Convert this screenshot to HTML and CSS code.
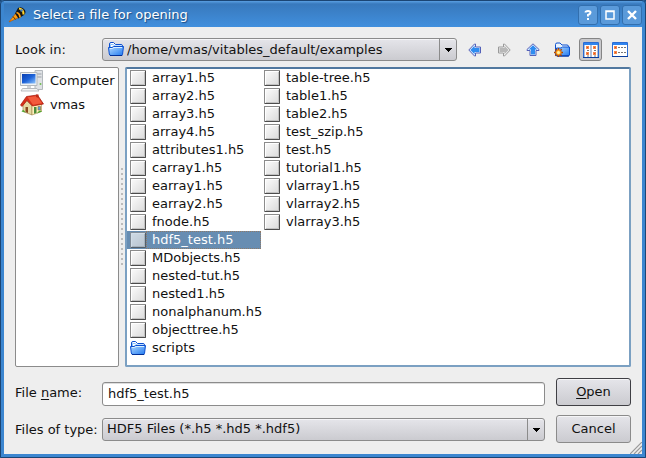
FILE: index.html
```
<!DOCTYPE html>
<html lang="en">
<head>
<meta charset="utf-8">
<title>Select a file for opening</title>
<link rel="stylesheet" href="styles.css">
</head>
<body>
<svg class="defs" aria-hidden="true">
  <defs>
    <linearGradient id="gFolder" x1="0" y1="0" x2="1" y2="1"><stop offset="0" stop-color="#b4dcff"/><stop offset="1" stop-color="#1f78f0"/></linearGradient>
    <linearGradient id="gFile" x1="0" y1="0" x2="1" y2="1"><stop offset="0" stop-color="#fdfdfd"/><stop offset="1" stop-color="#d9d9d9"/></linearGradient>
    <linearGradient id="gScreen" x1="0" y1="0" x2="1" y2="1"><stop offset="0" stop-color="#0a3fb0"/><stop offset=".5" stop-color="#1c62d8"/><stop offset="1" stop-color="#8cc4ff"/></linearGradient>
    <symbol id="folder" viewBox="0 0 16 14">
      <path d="M1.500 10V2Q1.500 .5 3 .5H5.500L7.500 2.500H13Q14.500 2.500 14.500 4V6" fill="#fff" stroke="#0b4fd0"/>
      <path d="M2.500 10V2.500H5L7 4H13" fill="none" stroke="#8ac4ff"/>
      <path d="M.5 5.500H4L5.500 4.500H15.500L14.500 12.500Q14.400 13.500 13 13.500H3Q1.500 13.500 1.300 12Z" fill="url(#gFolder)" stroke="#0b4fd0"/>
      <path d="M2 6.500H4.500L6 5.500H14" fill="none" stroke="#d9efff"/>
      <path d="M2 13.500H14.200" stroke="#002f98"/>
    </symbol>
    <symbol id="folder-tall" viewBox="0 0 16 14">
      <path d="M1.500 13V2Q1.500 .5 3 .5H6L8 2.500H13Q14.500 2.500 14.500 4V13Z" fill="#eaf5ff" stroke="#0b4fd0"/>
      <path d="M2.500 13V5.500H7L8.500 4.500H15.500V12.500L14.500 13.500H2.500Z" fill="url(#gFolder)" stroke="#0b4fd0"/>
      <path d="M3 13.500H15" stroke="#002f98"/>
    </symbol>
    <symbol id="file" viewBox="0 0 16 16">
      <rect x=".5" y=".5" width="15" height="15" fill="url(#gFile)" stroke="#8c8c8c"/>
      <path d="M1.500 14.500V1.500H14.500" fill="none" stroke="#fff"/>
      <path d="M1 15.500H15.500V1" fill="none" stroke="#4c4c4c"/>
      <path d="M2 14.500H14.500V2" fill="none" stroke="#c2c2c2"/>
    </symbol>
    <symbol id="arrow" viewBox="0 0 14 14">
      <path class="arrow-rim" d="M.8 7 6.500 1H7.500V4H12.500V10H7.500V13H6.500Z"/>
      <path class="arrow-core" d="M2.300 7 6.600 2.700V5H11.500V9H6.600V11.300Z"/>
    </symbol>
  </defs>
</svg>
<div class="window">
  <header class="titlebar">
    <svg class="app-icon" viewBox="0 0 18 18" aria-hidden="true">
      <path d="M1 16 8 7 12 11Z" fill="#ff9d12" stroke="#a65300" stroke-width=".6"/>
      <path d="M7 7.500 10 2Q13 0 16 3T16 9L10.500 12.500Z" fill="#151515"/>
      <path d="M5 10.500 7.500 13.500" stroke="#5c3300" stroke-width="1"/>
      <path d="M8.500 6.500Q12 7.500 12 11.500" fill="none" stroke="#ff9d12" stroke-width="1.800"/>
      <path d="M11 2.500Q15.500 3 15.500 8.500" fill="none" stroke="#ffd22a" stroke-width="2"/>
      <circle cx="13.500" cy="4.500" r="1.300" fill="#4e7fb5"/>
      <path d="M1 16 3.500 14.500 2.500 13.500Z" fill="#e46b00"/>
    </svg>
    <h1 class="title">Select a file for opening</h1>
    <button class="win-btn" type="button" aria-label="Help"><svg viewBox="0 0 12 12"><path d="M3.500 3.500Q3.500 2 6 2T8.500 3.800Q8.500 5 6 6V7.500M6 9V11"/></svg></button>
    <button class="win-btn" type="button" aria-label="Maximize"><svg viewBox="0 0 12 12"><path d="M2 2H10V10H2ZM2 2.500H10" stroke-width="1.500"/></svg></button>
    <button class="win-btn" type="button" aria-label="Close"><svg viewBox="0 0 12 12"><path d="M2 2 10 10M10 2 2 10" stroke-width="2.400"/></svg></button>
  </header>

  <main class="content">
    <div class="look-row">
      <label class="label" for="look">Look in:</label>
      <div class="combo with-icon">
        <svg class="combo-icon" aria-hidden="true"><use href="#folder"/></svg>
        <select id="look"><option>/home/vmas/vitables_default/examples</option></select>
      </div>
      <div class="tools">
        <button class="tool" type="button" aria-label="Back"><svg class="nav" viewBox="0 0 14 14"><use href="#arrow"/></svg></button>
        <button class="tool" type="button" aria-label="Forward" disabled><svg class="nav off" viewBox="0 0 14 14"><use href="#arrow" transform="rotate(180 7 7)"/></svg></button>
        <button class="tool" type="button" aria-label="Parent directory"><svg class="nav" viewBox="0 0 14 14"><use href="#arrow" transform="rotate(90 7 7)"/></svg></button>
        <button class="tool" type="button" aria-label="Create new folder">
          <svg class="new-folder" viewBox="0 0 18 16">
            <use href="#folder-tall" x="1" y="0" width="16" height="15"/>
            <path d="M5.500 6V15M1 10.500H10M2.300 7.300 8.700 13.700M8.700 7.300 2.300 13.700" stroke="#a64300" stroke-width="1.400"/>
            <circle cx="5.500" cy="10.500" r="2.800" fill="#ffad28" stroke="#d96000" stroke-width=".8"/>
            <circle cx="5.500" cy="10.500" r="1.500" fill="#fff2a6"/>
          </svg>
        </button>
        <button class="tool pressed" type="button" aria-label="List view" aria-pressed="true">
          <svg class="view" viewBox="0 0 16 16">
            <path d="M.5 .5H15.500V15.500H.5Z" fill="#fff" stroke="#2a6cd4"/>
            <path d="M1 1H15V3H1Z" fill="#2f84ee"/><path d="M0 15.500H16" stroke="#083c9c"/>
            <path d="M1.500 3V15M7.500 3V15M8.500 3V15M14.500 3V15" stroke="#b3bfd4"/>
            <path d="M3 4H6V7H3ZM3 10H6V13H3ZM10 4H13V7H10ZM10 10H13V13H10Z" fill="#f4864a"/>
            <path d="M4 5H5V6H4ZM4 11H5V12H4ZM11 5H12V6H11ZM11 11H12V12H11Z" fill="#e64f10"/>
            <path d="M4 8.500H6M11 8.500H13M4 14H6M11 14H13" stroke="#777"/>
          </svg>
        </button>
        <button class="tool" type="button" aria-label="Detail view">
          <svg class="view" viewBox="0 0 16 16">
            <path d="M.5 .5H15.500V14.500H.5Z" fill="#fff" stroke="#2a6cd4"/>
            <path d="M1 1H15V3H1Z" fill="#2f84ee"/><path d="M0 14.500H16" stroke="#083c9c"/>
            <path d="M2 4H5V7H2ZM2 9H5V12H2Z" fill="#f4864a"/>
            <path d="M3 5H4V6H3ZM3 10H4V11H3Z" fill="#e64f10"/>
            <path d="M6 5.500H8M9 5.500H11M12 5.500H14M6 10.500H8M9 10.500H11M12 10.500H14" stroke="#777"/>
          </svg>
        </button>
      </div>
    </div>

    <div class="panes">
      <ul class="places">
        <li><svg viewBox="0 0 24 22" aria-hidden="true">
          <path d="M15 .5H22.500V19.500H15Z" fill="#dfe2e5" stroke="#b3b8bd"/>
          <path d="M17 4H21.500M17 7H21.500" stroke="#9ba1a8"/><circle cx="20.500" cy="14" r="1" fill="#6fbb52"/>
          <path d="M.5 2.500H17V15.500H.5Z" fill="#eef1f4" stroke="#b3b8bd"/>
          <path d="M2 4H15.500V13.500H2Z" fill="url(#gScreen)"/>
          <path d="M7 16H11V18H14V19H4V18H7Z" fill="#cfd3d7"/>
          <path d="M2.500 18.500H17L19 21H1Z" fill="#f3f3f3" stroke="#a9aeb4" stroke-width=".8"/>
        </svg>Computer</li>
        <li><svg viewBox="0 0 24 22" aria-hidden="true">
          <path d="M3 10 6 6 12 12V21L3 17.500Z" fill="#e6d9a3" stroke="#8e7840" stroke-width=".6"/>
          <path d="M12 10H21.500V17.500L12 21Z" fill="#fff0bd" stroke="#a68a4b" stroke-width=".6"/>
          <path d="M.5 11 6.500 2.500 17.500 1 23.500 10 12.500 12 7 6.500 2 12.500Z" fill="#d8301a" stroke="#a31608" stroke-width=".7"/>
          <path d="M7.500 3.200 17 2 22 9.200 13 10.800Z" fill="#f25a3c"/>
          <path d="M16 .5H18.500V4L16 3Z" fill="#bd2b18"/>
          <path d="M5.500 13H8V19L5.500 18Z" fill="#8a4b20"/>
          <path d="M14 13H16.500V19L14 19.800Z" fill="#4c8a3a"/><path d="M18 12.500H20.500V16H18Z" fill="#5b9de0" stroke="#846d38" stroke-width=".6"/>
          <path d="M1.500 17.500Q3.500 14 5.500 18.500ZM17 19.500Q19.500 15 22 17.500Z" fill="#4fa72f"/>
        </svg>vmas</li>
      </ul>
      <div class="splitter" role="separator"><span></span></div>
      <ul class="files" role="listbox" aria-label="Files">
        <li><svg><use href="#file"/></svg><span>array1.h5</span></li>
        <li><svg><use href="#file"/></svg><span>array2.h5</span></li>
        <li><svg><use href="#file"/></svg><span>array3.h5</span></li>
        <li><svg><use href="#file"/></svg><span>array4.h5</span></li>
        <li><svg><use href="#file"/></svg><span>attributes1.h5</span></li>
        <li><svg><use href="#file"/></svg><span>carray1.h5</span></li>
        <li><svg><use href="#file"/></svg><span>earray1.h5</span></li>
        <li><svg><use href="#file"/></svg><span>earray2.h5</span></li>
        <li><svg><use href="#file"/></svg><span>fnode.h5</span></li>
        <li class="selected"><svg><use href="#file"/></svg><span>hdf5_test.h5</span></li>
        <li><svg><use href="#file"/></svg><span>MDobjects.h5</span></li>
        <li><svg><use href="#file"/></svg><span>nested-tut.h5</span></li>
        <li><svg><use href="#file"/></svg><span>nested1.h5</span></li>
        <li><svg><use href="#file"/></svg><span>nonalphanum.h5</span></li>
        <li><svg><use href="#file"/></svg><span>objecttree.h5</span></li>
        <li><svg><use href="#folder"/></svg><span>scripts</span></li>
        <li><svg><use href="#file"/></svg><span>table-tree.h5</span></li>
        <li><svg><use href="#file"/></svg><span>table1.h5</span></li>
        <li><svg><use href="#file"/></svg><span>table2.h5</span></li>
        <li><svg><use href="#file"/></svg><span>test_szip.h5</span></li>
        <li><svg><use href="#file"/></svg><span>test.h5</span></li>
        <li><svg><use href="#file"/></svg><span>tutorial1.h5</span></li>
        <li><svg><use href="#file"/></svg><span>vlarray1.h5</span></li>
        <li><svg><use href="#file"/></svg><span>vlarray2.h5</span></li>
        <li><svg><use href="#file"/></svg><span>vlarray3.h5</span></li>
      </ul>
    </div>

    <form class="form">
      <label class="label" for="name">File <u>n</u>ame:</label>
      <input class="field" id="name" type="text" value="hdf5_test.h5">
      <button class="btn default" type="button"><u>O</u>pen</button>
      <label class="label" for="type">Files of type:</label>
      <div class="combo"><select id="type"><option>HDF5 Files (*.h5 *.hd5 *.hdf5)</option></select></div>
      <button class="btn" type="button">Cancel</button>
    </form>
  </main>
  <svg class="grip" viewBox="0 0 12 12" aria-hidden="true"><path d="M0 12 12 0M4 12 12 4M8 12 12 8" stroke="#999" stroke-width="1.200"/></svg>
</div>
</body>
</html>
```
FILE: styles.css
```
* { box-sizing: border-box; }
body {
  margin: 0;
  background: #1b4574;
  font: 13px/18px "DejaVu Sans", sans-serif;
  color: #111;
}
ul { list-style: none; margin: 0; padding: 0; }
button, select, input { font: inherit; color: inherit; margin: 0; }
svg { flex: none; display: block; }
u { text-underline-offset: 2px; }
.defs { position: absolute; width: 0; height: 0; }

.window {
  position: relative;
  display: flex;
  flex-direction: column;
  min-height: 100vh;
  background: #eee;
  border: solid #3c86d0;
  border-width: 0 4px 4px;
  outline: 1px solid #1b4574;
  outline-offset: -1px;
  border-radius: 4px 4px 0 0;
}
.titlebar {
  display: flex;
  align-items: center;
  gap: 2px;
  height: 27px;
  padding: 3px 0 0 4px;
  background: linear-gradient(#1b4574 0, #1b4574 1px, #5a9fe2 1px, #3879bd 4px, #418fdd 100%);
}
.app-icon { width: 18px; height: 18px; }
.title {
  flex: 1;
  margin: 0 0 0 5px;
  font-size: 13px;
  font-weight: normal;
  line-height: 20px;
  color: #fff;
  text-shadow: 1px 1px 1px #1c4c80;
}
.win-btn {
  display: grid;
  place-items: center;
  width: 20px;
  height: 20px;
  padding: 0;
  border: 1px solid #326fae;
  border-radius: 3px;
  background: #5a9ada;
}
.win-btn svg { width: 12px; height: 12px; fill: none; stroke: #fff; stroke-width: 2; }

.content {
  flex: 1;
  display: flex;
  flex-direction: column;
  padding: 11px;
}
.look-row {
  display: grid;
  grid-template-columns: 87px 1fr 174px;
  align-items: center;
  height: 23px;
}
.combo { position: relative; display: flex; min-width: 0; }
.combo::after {
  content: "";
  position: absolute;
  top: 1px;
  right: 1px;
  bottom: 1px;
  width: 16px;
  border-left: 1px solid #8b8b8b;
  background: linear-gradient(#000, #000) 5px 9px / 7px 1px no-repeat,
    linear-gradient(#000, #000) 6px 10px / 5px 1px no-repeat,
    linear-gradient(#000, #000) 7px 11px / 3px 1px no-repeat,
    linear-gradient(#000, #000) 8px 12px / 1px 1px no-repeat;
  pointer-events: none;
}
.combo select {
  appearance: none;
  width: 100%;
  height: 23px;
  padding: 0 20px 0 4px;
  border: 1px solid #8b8b8b;
  border-radius: 3px;
  background: linear-gradient(#e5e5ea, #cbcbd0);
  box-shadow: inset 0 1px #f5f5f7;
}
.combo.with-icon select { padding-left: 24px; }
.combo-icon { position: absolute; left: 6px; top: 4px; width: 16px; height: 14px; }
.tools { display: flex; justify-content: flex-end; gap: 6px; }
.tool {
  display: grid;
  place-items: center;
  width: 23px;
  height: 23px;
  padding: 0;
  border: 1px solid transparent;
  border-radius: 3px;
  background: none;
}
.tool.pressed { border-color: #858585; background: #c9c9cc; }
.nav { --rim: #5360b8; --rim-fill: #e4f0ff; --core: #2f8cf0; width: 14px; height: 14px; }
.nav.off { --rim: #9a9a9a; --rim-fill: #f2f2f2; --core: #b8b8b8; }
.arrow-rim { fill: var(--rim-fill); stroke: var(--rim); stroke-width: 1; }
.arrow-core { fill: var(--core); }
.new-folder { width: 18px; height: 16px; }
.view { width: 16px; height: 16px; }

.panes {
  flex: 1;
  display: grid;
  grid-template-columns: 104px 6px 1fr;
  margin-top: 6px;
}
.places, .files { border: 1px solid #8b8b8b; border-radius: 2px; background: #fff; }
.places { padding-top: 1px; }
.places li { display: flex; align-items: center; gap: 6px; height: 24px; padding-left: 4px; }
.places svg { width: 24px; height: 22px; }
.splitter { display: grid; place-items: center; }
.splitter span {
  width: 2px;
  height: 98px;
  background: repeating-linear-gradient(#bbb 0, #bbb 2px, transparent 2px, transparent 5px);
}
.files {
  display: grid;
  grid-auto-flow: column;
  grid-template-rows: repeat(16, 18px);
  grid-auto-columns: 134px;
  align-content: start;
  border: 2px solid #7ba0c2;
  border-top-color: #51789f;
}
.files li { display: flex; align-items: center; padding-left: 3px; }
.files svg { width: 16px; height: 16px; }
.files span { flex: 1; padding-left: 5px; border: 1px solid transparent; line-height: 16px; }
.files .selected { background: #678db2; color: #fff; }
.files .selected svg { opacity: .7; }
.files .selected span { border: 1px dotted #8f7a68; }

.form {
  display: grid;
  grid-template-columns: 87px 1fr 75px;
  row-gap: 9px;
  align-items: center;
  margin-top: 11px;
}
.form .label { padding-top: 2px; }
.form .combo, .field { margin-right: 11px; }
.field {
  height: 24px;
  min-width: 0;
  margin-top: 3px;
  padding: 0 5px;
  border: 1px solid #8b8b8b;
  border-radius: 3px;
  background: #fff;
  box-shadow: inset 0 1px #ddd;
}
.btn {
  height: 28px;
  padding: 0;
  border: 1px solid #8b8b8b;
  border-radius: 3px;
  background: linear-gradient(#e5e5ea, #cbcbd0);
  box-shadow: inset 0 1px #f5f5f7;
}
.btn.default { border-color: #3f3f44; }
.grip { position: absolute; right: 0; bottom: 0; width: 12px; height: 12px; fill: none; }
```
